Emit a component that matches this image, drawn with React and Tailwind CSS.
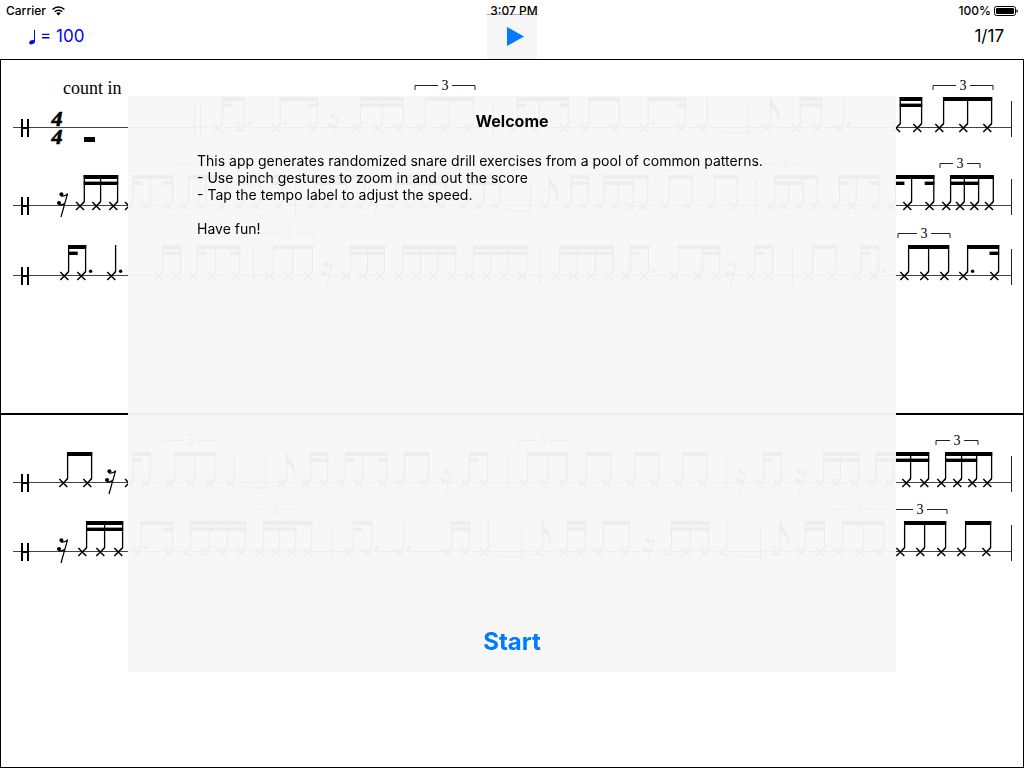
import React, { useState } from "react";

// Kinds of entries in a stave (all x values are in score units):
//  notes   - beamed group, or a lone stem. "beam" says what the second beam does:
//            "full", "left", "right", "both" (stubs), "three" (first three notes)
//            or "lastTwo"
//  rest    - eighth rest
//  flag    - single eighth note
//  bar     - bar line
//  tie     - slur below the line
const notes = (heads, beam, dots = [], triplet) => ({ kind: "notes", heads, beam, dots, triplet });
const rest = x => ({ kind: "rest", x });
const flag = x => ({ kind: "flag", x });
const bar = x => ({ kind: "bar", x });
const tie = (from, to) => ({ kind: "tie", from, to });

const PAGES = [
  {
    id: "page-1",
    staves: [
      {
        id: "s1",
        spacing: "mb-[9px]",
        intro: true,
        items: [
          bar(194.5),
          bar(200.5),
          notes([218, 240], "left", [1]),
          notes([276, 313], "right", [0]),
          rest(328),
          notes([356.5, 378, 399], "full"),
          notes([421.3, 445.3, 469.3], null, [], [415, 475]),
          bar(493.5),
          notes([513, 535, 564], "both"),
          notes([585, 615]),
          notes([644, 681.3], "right", [0]),
          notes([703]),
          tie(712, 757),
          bar(747.5),
          flag(766.3),
          notes([796, 817.3], "full"),
          notes([839.3], null, [0]),
          notes([896, 917.3], "full"),
          notes([939.3, 963.3, 987.3], null, [], [933, 993])
        ]
      },
      {
        id: "s2",
        spacing: "mb-px",
        items: [
          rest(57),
          notes([80, 96.3, 113.3], "full"),
          notes([129, 146, 168.3], "both"),
          notes([184.3, 201.7, 221.7], null, [], [178, 230]),
          notes([239, 256.3, 278.3], "both"),
          bar(295.5),
          notes([310.3, 326.3, 342, 360.3], "three", [], [304, 352]),
          rest(370),
          notes([392, 409.7, 425.7, 441.3], "full"),
          notes([463.3, 479.7, 496], "full"),
          tie(505, 535),
          bar(530.5),
          flag(545),
          notes([567, 584], "full"),
          notes([600, 614, 629, 643.3], "three", [], [594, 635]),
          notes([665, 688]),
          notes([710.3, 733]),
          bar(755.5),
          notes([770.3, 784.3, 799, 813.3], "three", [], [764, 804]),
          notes([835, 852, 874.3], "both"),
          notes([891, 907.3, 929.5], "both"),
          notes([946.3, 960, 974.3, 989], "three", [], [940, 980])
        ]
      },
      {
        id: "s3",
        spacing: "",
        items: [
          notes([64.3, 81.3], "left", [1]),
          notes([111.3], null, [0]),
          notes([158.3, 176.3], "full"),
          notes([193.3, 211.3, 235.3], "both"),
          bar(253.5),
          notes([269.3, 288.3, 308.3], null, [], [262, 314]),
          rest(322),
          notes([346.3, 363, 380.3], "full"),
          notes([398.3, 416.3, 433.7, 451.3], "full"),
          notes([469.3, 486.3, 504, 522.3], "full"),
          bar(539.5),
          notes([555.3, 573.3, 591, 608.7], "full"),
          notes([626, 644.3], "left", [1]),
          notes([674.3, 698, 715.3], "lastTwo"),
          rest(726),
          notes([750.3, 768.3], "left"),
          bar(792.5),
          notes([808.3, 832]),
          notes([856.7, 874], "left", [1]),
          notes([904.3, 924.3, 944.3], null, [], [898, 950]),
          notes([963.3, 994.3], "right", [0])
        ]
      }
    ]
  },
  {
    id: "page-2",
    staves: [
      {
        id: "s4",
        spacing: "",
        items: [
          notes([63.3, 87.3]),
          rest(105),
          notes([129, 146], "left"),
          notes([170.3, 190.3, 210.3], null, [], [164, 216]),
          notes([230]),
          tie(241, 273),
          bar(265.5),
          flag(282.3),
          notes([306.3, 323.3], "full"),
          notes([341.3, 358.3, 382.3], "both"),
          notes([400.3, 424.3]),
          rest(441),
          notes([465.3, 483.3], "left"),
          bar(507.5),
          notes([523.3, 543.3, 562.7], null, [], [517, 568]),
          notes([582, 606.3]),
          notes([630.3, 654.3]),
          notes([678.3, 702.3]),
          bar(726.5),
          rest(736),
          notes([759.3, 777.3], "left"),
          rest(795),
          notes([819.3, 836.3, 854.3], "full"),
          notes([871.7, 889.3, 906.3, 924.3], "full"),
          notes([941.3, 957.3, 972.3, 987.3], "three", [], [936, 978])
        ]
      },
      {
        id: "s5",
        spacing: "",
        items: [
          rest(57),
          notes([82.3, 100.3, 118.3], "full"),
          notes([137, 168.3], "right", [0]),
          notes([186.3, 205, 223, 241.3], "full"),
          notes([259.3, 275.3, 291.3, 307.3], "three", [], [253, 297]),
          bar(332.5),
          notes([349.3, 367.3], "left", [1]),
          notes([399.3], null, [0]),
          notes([447.3, 465.3], "full"),
          notes([484]),
          tie(491, 529),
          bar(521.5),
          flag(538.3),
          notes([563.3, 581.3], "full"),
          notes([599, 625]),
          rest(643),
          notes([667, 686, 704.3], "full"),
          notes([722.3]),
          tie(729, 768),
          bar(760.5),
          flag(776),
          notes([801.3, 820.3], "full"),
          notes([838.3, 859.3, 879.3], null, [], [832, 885]),
          notes([900.3, 920.3, 941.3], null, [], [893, 947]),
          notes([961.3, 986.3])
        ]
      }
    ]
  }
];

// the staff line sits at y = 50.5 inside each stave drawing
function NoteHead({ x }) {
  return <path d={`M${x - 4} 47l8 8M${x - 4} 55l8 -8`} stroke="#000" strokeWidth="1.5" />;
}

function Stem({ x }) {
  return <path d={`M${x + 4.3} 20V46.5l-1.5 1.8`} fill="none" stroke="#000" strokeWidth="1.3" />;
}

function Notes({ heads, beam, dots, triplet }) {
  const stems = heads.map(x => x + 4.3);
  const first = stems[0];
  const last = stems[stems.length - 1];
  const second = [];

  if (beam === "full") second.push([first, last]);
  if (beam === "three") second.push([first, stems[2]]);
  if (beam === "lastTwo") second.push([stems[1], last]);
  if (beam === "left" || beam === "both") second.push([first, first + 8.5]);
  if (beam === "right" || beam === "both") second.push([last - 8.5, last]);

  return (
    <g>
      {heads.map(x => (
        <g key={x}>
          <NoteHead x={x} />
          <Stem x={x} />
        </g>
      ))}
      {heads.length > 1 ? (
        <rect x={first - 0.6} y="20" width={last - first + 1.2} height="4" />
      ) : null}
      {second.map(([from, to]) => (
        <rect key={from} x={from - 0.6} y="26.6" width={to - from + 1.2} height="3.4" />
      ))}
      {dots.map(i => (
        <circle key={i} cx={heads[i] + 9.3} cy="46.2" r="1.7" />
      ))}
      {triplet ? <Triplet from={triplet[0]} to={triplet[1]} /> : null}
    </g>
  );
}

function Triplet({ from, to }) {
  const mid = (from + to) / 2;
  return (
    <g>
      <path
        d={`M${from} 13V8.5H${mid - 7}M${mid + 7} 8.5H${to}V13`}
        fill="none"
        stroke="#222"
        strokeWidth="1"
      />
      <text
        x={mid}
        y="13"
        textAnchor="middle"
        className="font-['Liberation_Serif',serif] text-[14px]"
      >
        3
      </text>
    </g>
  );
}

function Rest({ x }) {
  return (
    <g>
      <circle cx={x + 4.4} cy="39.3" r="2" />
      <circle cx={x + 2} cy="48" r="2" />
      <path
        d={`M${x + 4} 41q4 1 6.6 -2.4L${x + 4} 62M${x + 2} 49.6q3.5 .8 6 -1.6`}
        fill="none"
        stroke="#000"
        strokeWidth="1.2"
      />
    </g>
  );
}

function Flag({ x }) {
  const s = x + 4.3;
  return (
    <g>
      <NoteHead x={x} />
      <Stem x={x} />
      <path d={`M${s} 20c0 6 8.6 10 8.6 18c0 3 -.6 5.5 -1.4 8c.4 -8 -1.600 -11.500 -7.200 -16z`} />
    </g>
  );
}

function Item({ item }) {
  if (item.kind === "notes") return <Notes {...item} />;
  if (item.kind === "rest") return <Rest x={item.x} />;
  if (item.kind === "flag") return <Flag x={item.x} />;
  if (item.kind === "tie") {
    const mid = (item.from + item.to) / 2;
    return (
      <path
        d={`M${item.from} 53.500Q${mid} 60 ${item.to} 53.500Q${mid} 58 ${item.from} 53.500`}
        stroke="#000"
        strokeWidth="0.3"
      />
    );
  }
  return <path d={`M${item.x} 24V60`} stroke="#222" strokeWidth="1" />;
}

function Intro() {
  return (
    <g className="font-['Liberation_Serif',serif]">
      <text x="63" y="17" className="text-[18px]">
        count in
      </text>
      <g textAnchor="middle" stroke="#000" strokeWidth="0.7" className="text-[22px] font-bold italic">
        <text x="57" y="49">
          4
        </text>
        <text x="57" y="67">
          4
        </text>
      </g>
      <rect x="84" y="60" width="11" height="5" />
    </g>
  );
}

function Stave({ stave }) {
  return (
    <svg viewBox="1 0 1022 69" className={`block w-full overflow-visible ${stave.spacing}`}>
      <path d="M13 50.5H1011.5" stroke="#444" strokeWidth="1" />
      <path d="M22 42V60M28 42V60M22 51H28" stroke="#000" strokeWidth="2" />
      {stave.intro ? <Intro /> : null}
      {stave.items.map((item, i) => (
        <Item key={i} item={item} />
      ))}
      <path d="M1011.5 24V60" stroke="#222" strokeWidth="1" />
    </svg>
  );
}

function StatusBar() {
  return (
    <div className="relative z-10 grid h-5 grid-cols-[1fr_auto_1fr] items-center px-1.5 pt-0.5 text-[12px] font-medium">
      <div className="flex items-center gap-1.5">
        <span>Carrier</span>
        <svg width="13" height="10" viewBox="0 0 13 10">
          <g fill="none" stroke="#000" strokeWidth="1.5">
            <path d="M.6 3.500a8.300 8.300 0 0 1 11.800 0" />
            <path d="M2.700 5.700a5.400 5.400 0 0 1 7.600 0" />
          </g>
          <path d="M6.500 9.600l-2.200 -2.300a3.100 3.100 0 0 1 4.400 0z" />
        </svg>
      </div>
      <span className="pl-1">3:07 PM</span>
      <div className="flex items-center justify-end gap-[3px]">
        <span>100%</span>
        <svg width="24" height="10" viewBox="0 0 24 10">
          <rect x=".5" y=".5" width="21" height="9" rx="2" fill="none" stroke="#000" />
          <rect x="2" y="2" width="18" height="6" rx="1" />
          <path d="M22.500 3.200q1.500 .6 1.500 1.800t-1.500 1.800z" />
        </svg>
      </div>
    </div>
  );
}

function Toolbar({ playing, onToggle }) {
  return (
    <div className="grid h-[39px] grid-cols-[1fr_auto_1fr] grid-rows-1 items-start text-[17px]">
      <button type="button" className="ml-7 flex h-[34px] items-center gap-1 justify-self-start text-[#0000ff]">
        <svg width="8" height="15" viewBox="0 0 8 15" fill="#0000ff">
          <path d="M6.500 0V12" stroke="#0000ff" strokeWidth="1" />
          <ellipse cx="4" cy="12.200" rx="2.900" ry="2" transform="rotate(-20 4 12.200)" />
        </svg>
        = 100
      </button>
      <button
        type="button"
        aria-label="Play"
        aria-pressed={playing}
        onClick={onToggle}
        className="flex h-[45px] w-[50px] items-center justify-center self-end border-t border-[#b0b0b0] bg-[#f6f6f6] pb-0.5 pl-1.5"
      >
        <svg width="17" height="19" viewBox="0 0 17 19">
          <path d="M0 0L17 9.500L0 19z" fill="#007aff" />
        </svg>
      </button>
      <span className="mr-5 flex h-[34px] items-center justify-self-end">1/17</span>
    </div>
  );
}

function WelcomeDialog({ onStart }) {
  return (
    <div className="fixed inset-0 z-20 flex items-center justify-center">
      <div
        role="dialog"
        aria-labelledby="welcome-title"
        className="flex h-3/4 w-3/4 flex-col items-center bg-[#f7f7f7]/96 pt-3.5 pb-3"
      >
        <h1 id="welcome-title" className="text-[16px] leading-[22px] font-bold">
          Welcome
        </h1>
        <div className="w-full flex-1 px-[69px] pt-5 text-[14px] leading-[17px]">
          <p className="w-fit bg-[#f7f7f7]">
            This app generates randomized snare drill exercises from a pool of common patterns.
          </p>
          <p>- Use pinch gestures to zoom in and out the score</p>
          <p>- Tap the tempo label to adjust the speed.</p>
          <p className="mt-[17px]">Have fun!</p>
        </div>
        <button
          type="button"
          onClick={onStart}
          className="text-[24px] leading-9 font-bold text-[#007aff]"
        >
          Start
        </button>
      </div>
    </div>
  );
}

export default function App() {
  const [welcome, setWelcome] = useState(true);
  const [playing, setPlaying] = useState(false);

  return (
    <div className="flex min-h-screen flex-col bg-white font-['Inter','Liberation_Sans',sans-serif] text-black">
      <StatusBar />
      <Toolbar
        playing={playing}
        onToggle={() => {
          setPlaying(!playing);
        }}
      />
      <main className="grid flex-1 auto-rows-fr">
        {PAGES.map(page => (
          <section key={page.id} className="border border-black pt-[17px]">
            {page.staves.map(stave => (
              <Stave key={stave.id} stave={stave} />
            ))}
          </section>
        ))}
      </main>
      {welcome ? (
        <WelcomeDialog
          onStart={() => {
            setWelcome(false);
          }}
        />
      ) : null}
    </div>
  );
}
